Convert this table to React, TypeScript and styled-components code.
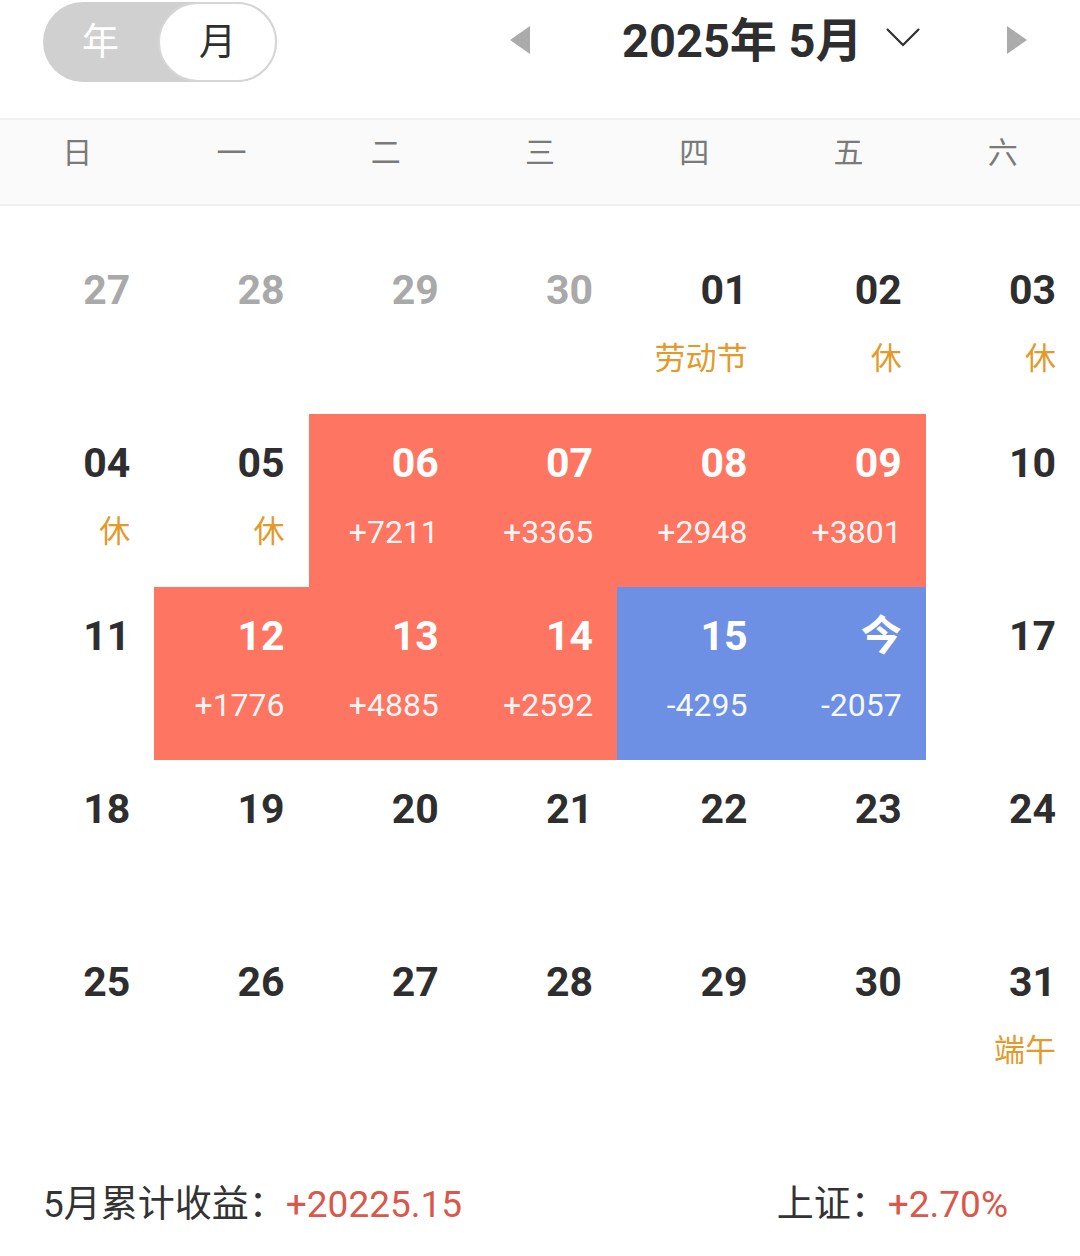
import React from "react";
import styled, { createGlobalStyle } from "styled-components";

const GlobalStyle = createGlobalStyle`
  html, body { margin: 0; padding: 0; background: #ffffff; }
  body {
    font-family: Roboto, "Noto Sans CJK SC", "Noto Sans", sans-serif;
    color: #333333;
  }
  * { box-sizing: border-box; }
`;

const Page = styled.div`
  width: 1080px;
  height: 1256px;
  background: #ffffff;
  overflow: hidden;
`;

const Header = styled.div`
  height: 84px;
  display: flex;
  align-items: center;
  padding-left: 43px;
  margin-bottom: 34px;
`;

const Toggle = styled.div`
  width: 234px;
  height: 80px;
  border-radius: 40px;
  background: #d0d0d0;
  display: flex;
`;

const ToggleItem = styled.div<{ $active?: boolean }>`
  flex: 1;
  height: 100%;
  border-radius: 40px;
  display: flex;
  align-items: center;
  justify-content: center;
  padding-bottom: 6px;
  font-family: "Noto Sans CJK SC", sans-serif;
  font-size: 37px;
  color: ${(p) => (p.$active ? "#2e2e2e" : "#ffffff")};
  background: ${(p) => (p.$active ? "#ffffff" : "transparent")};
  border: ${(p) => (p.$active ? "2px solid #d6d6d6" : "none")};
`;

const Nav = styled.div`
  display: flex;
  align-items: center;
  margin-left: 233px;
  padding-bottom: 4px;
`;

const Triangle = styled.svg<{ $gapAfter: number }>`
  width: 20px;
  height: 28px;
  margin-right: ${(p) => p.$gapAfter}px;
  flex-shrink: 0;
`;

const Title = styled.div`
  font-family: Roboto, "Noto Sans CJK SC", sans-serif;
  font-weight: 700;
  font-size: 47px;
  line-height: 56px;
  color: #2e2e2e;
  white-space: nowrap;
  margin-right: 23px;
  padding-top: 1px;
`;

const Chevron = styled.svg`
  width: 34px;
  height: 20px;
  margin-right: 87px;
  margin-bottom: 6px;
  flex-shrink: 0;
`;

const WeekBar = styled.div`
  height: 88px;
  background: #fafafa;
  border-top: 2px solid #f0f0f0;
  border-bottom: 2px solid #f0f0f0;
  display: grid;
  grid-template-columns: repeat(7, 1fr);
  align-items: center;
  padding-bottom: 24px;
`;

const WeekLabel = styled.div`
  text-align: center;
  font-family: "Noto Sans CJK SC", sans-serif;
  font-size: 30px;
  color: #7a7a7a;
`;

const Grid = styled.div`
  margin-top: 35px;
  display: grid;
  grid-template-columns: repeat(7, 1fr);
  grid-auto-rows: 173px;
`;

type Tone = "none" | "up" | "down";

const Cell = styled.div<{ $tone: Tone }>`
  padding: 22px 24px 0 0;
  text-align: right;
  background: ${(p) =>
    p.$tone === "up" ? "#fe7561" : p.$tone === "down" ? "#6e90e4" : "transparent"};
`;

const DateNum = styled.div<{ $muted?: boolean; $light?: boolean }>`
  font-family: Roboto, "Noto Sans CJK SC", sans-serif;
  font-weight: 700;
  font-size: 41px;
  line-height: 54px;
  color: ${(p) => (p.$light ? "#ffffff" : p.$muted ? "#a9a9a9" : "#2e2e2e")};
`;

const Sub = styled.div<{ $kind: "holiday" | "value" }>`
  margin-top: 22px;
  font-family: Roboto, "Noto Sans CJK SC", sans-serif;
  font-size: ${(p) => (p.$kind === "holiday" ? 31 : 32)}px;
  line-height: 40px;
  color: ${(p) => (p.$kind === "holiday" ? "#e39a2b" : "rgba(255,255,255,0.95)")};
`;

const Summary = styled.div`
  margin-top: 79px;
  display: flex;
  justify-content: space-between;
  padding: 0 72px 0 43px;
  font-family: Roboto, "Noto Sans CJK SC", sans-serif;
  font-size: 37px;
  line-height: 40px;
`;

const SummaryItem = styled.div`
  display: flex;
  align-items: center;
  color: #333333;
  white-space: nowrap;
`;

const Label = styled.span`
  font-family: Roboto, "Noto Sans CJK SC", sans-serif;
`;

const Gain = styled.span`
  color: #d9584b;
`;

type Day = {
  d: string;
  muted?: boolean;
  tone?: Tone;
  holiday?: string;
  value?: string;
};

const days: Day[] = [
  { d: "27", muted: true },
  { d: "28", muted: true },
  { d: "29", muted: true },
  { d: "30", muted: true },
  { d: "01", holiday: "劳动节" },
  { d: "02", holiday: "休" },
  { d: "03", holiday: "休" },
  { d: "04", holiday: "休" },
  { d: "05", holiday: "休" },
  { d: "06", tone: "up", value: "+7211" },
  { d: "07", tone: "up", value: "+3365" },
  { d: "08", tone: "up", value: "+2948" },
  { d: "09", tone: "up", value: "+3801" },
  { d: "10" },
  { d: "11" },
  { d: "12", tone: "up", value: "+1776" },
  { d: "13", tone: "up", value: "+4885" },
  { d: "14", tone: "up", value: "+2592" },
  { d: "15", tone: "down", value: "-4295" },
  { d: "今", tone: "down", value: "-2057" },
  { d: "17" },
  { d: "18" },
  { d: "19" },
  { d: "20" },
  { d: "21" },
  { d: "22" },
  { d: "23" },
  { d: "24" },
  { d: "25" },
  { d: "26" },
  { d: "27" },
  { d: "28" },
  { d: "29" },
  { d: "30" },
  { d: "31", holiday: "端午" },
];

const weekdays = ["日", "一", "二", "三", "四", "五", "六"];

export default function App() {
  return (
    <Page>
      <GlobalStyle />
      <Header>
        <Toggle>
          <ToggleItem>年</ToggleItem>
          <ToggleItem $active>月</ToggleItem>
        </Toggle>
        <Nav>
          <Triangle $gapAfter={92} viewBox="0 0 20 28">
            <polygon points="20,0 20,28 0,14" fill="#ababab" />
          </Triangle>
          <Title>2025年 5月</Title>
          <Chevron viewBox="0 0 34 20">
            <polyline points="1,2 17,18 33,2" fill="none" stroke="#2e2e2e" strokeWidth="2.2" />
          </Chevron>
          <Triangle $gapAfter={0} viewBox="0 0 20 28">
            <polygon points="0,0 0,28 20,14" fill="#ababab" />
          </Triangle>
        </Nav>
      </Header>
      <WeekBar>
        {weekdays.map((w) => (
          <WeekLabel key={w}>{w}</WeekLabel>
        ))}
      </WeekBar>
      <Grid>
        {days.map((day, i) => {
          const tone = day.tone ?? "none";
          return (
            <Cell key={i} $tone={tone}>
              <DateNum $muted={day.muted} $light={tone !== "none"}>
                {day.d}
              </DateNum>
              {day.holiday && <Sub $kind="holiday">{day.holiday}</Sub>}
              {day.value && <Sub $kind="value">{day.value}</Sub>}
            </Cell>
          );
        })}
      </Grid>
      <Summary>
        <SummaryItem>
          <Label>5月累计收益：</Label>
          <Gain>+20225.15</Gain>
        </SummaryItem>
        <SummaryItem>
          <Label>上证：</Label>
          <Gain>+2.70%</Gain>
        </SummaryItem>
      </Summary>
    </Page>
  );
}
